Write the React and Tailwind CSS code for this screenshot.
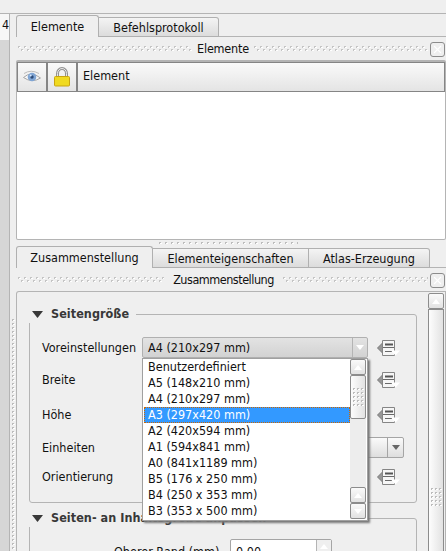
import React from 'react';

const papers = [
  'Benutzerdefiniert', 'A5 (148x210 mm)', 'A4 (210x297 mm)', 'A3 (297x420 mm)', 'A2 (420x594 mm)',
  'A1 (594x841 mm)', 'A0 (841x1189 mm)', 'B5 (176 x 250 mm)', 'B4 (250 x 353 mm)', 'B3 (353 x 500 mm)',
];

function TitleGrip({ id, className }) {
  return (
    <svg className={`h-[6px] ${className}`} shapeRendering="crispEdges">
      <defs>
        <pattern id={id} width="6" height="6" patternUnits="userSpaceOnUse">
          <path d="M0 0h2v1h-1v1h-1zM3 3h2v1h-1v1h-1z" fill="#c4c4c4" />
          <path d="M1 1h1v1h-1zM2 1h1v1h-1zM4 4h2v1h-2z" fill="#fff" />
        </pattern>
      </defs>
      <rect width="100%" height="6" fill={`url(#${id})`} />
    </svg>
  );
}

function DotGrip({ id, className, w = 6, h = 4 }) {
  return (
    <svg className={className} shapeRendering="crispEdges">
      <defs>
        <pattern id={id} width={w} height={h} patternUnits="userSpaceOnUse">
          <path d="M0 0h2v1h-1v1h-1z" fill="#bcbcbc" />
          <path d="M1 1h1v1h-1zM2 1h1v1h-1z" fill="#fff" />
        </pattern>
      </defs>
      <rect width="100%" height="100%" fill={`url(#${id})`} />
    </svg>
  );
}

function DockTitle({ id, text, left, right, label }) {
  return (
    <div className="flex h-[22px] shrink-0 items-center pl-[2px] pr-[1px]">
      <TitleGrip id={`${id}a`} className={left} />
      <span className={`shrink-0 whitespace-nowrap text-center ${label}`}>{text}</span>
      <TitleGrip id={`${id}b`} className={right} />
      <span className="ml-auto flex h-[15px] w-[15px] items-center justify-center rounded-[3px] border border-[#8c8c8c] bg-[#efefef]">
        <svg className="h-[9px] w-[9px]" viewBox="0 0 9 9"><path d="M1 1l7 7M8 1l-7 7" stroke="#fff" strokeWidth="1.1" /></svg>
      </span>
    </div>
  );
}

function Tab({ active, className, children }) {
  return active ? (
    <div className={`h-[22px] rounded-t-[3px] border border-b-0 border-[#b0b0b0] bg-[#efefef] text-center leading-[22px] ${className}`}>{children}</div>
  ) : (
    <div className={`mt-[2px] h-[20px] border border-l-0 border-[#b0b0b0] bg-linear-to-b from-[#f4f4f4] to-[#dcdcdc] text-center leading-[19px] ${className}`}>{children}</div>
  );
}

function Arrow({ up, color = '#fff' }) {
  return (
    <svg className="h-[5px] w-[8px]" viewBox="0 0 8 5"><path d={up ? 'M0 5L4 0L8 5z' : 'M0 0L4 5L8 0z'} fill={color} /></svg>
  );
}

function ScrollButton({ up }) {
  return (
    <div className="flex h-[16px] w-[16px] shrink-0 items-center justify-center rounded-[2px] border border-[#8c8c8c] bg-linear-to-b from-[#fafafa] to-[#e2e2e2]"><Arrow up={up} /></div>
  );
}

function Override() {
  return (
    <svg className="ml-[9px] h-[18px] w-[24px] shrink-0" viewBox="0 0 24 18">
      <path d="M0.500 9L6 3.500V14.500z" fill="#979797" stroke="#7a7a7a" />
      <path d="M5.500 1.500H17.500V16.500H5.500z" fill="#f6f6f6" stroke="#858585" />
      <path d="M8 5.500H16" stroke="#555" strokeWidth="2" />
      <path d="M8 12.500H15M6 8.500H17" stroke="#6a6a6a" />
      <path d="M14 11.500H23L18.500 16.500z" fill="#fff" />
    </svg>
  );
}

function Field({ label, className, children }) {
  return (
    <div className={`flex items-center ${className}`}>
      <span className="w-[100px] shrink-0 whitespace-nowrap">{label}</span>
      {children}
      <Override />
    </div>
  );
}

function GroupBox({ title, className, children }) {
  return (
    <fieldset className={`ml-[12px] w-[388px] rounded-[3px] border border-[#b4b4b4] ${className}`}>
      <legend className="-ml-px flex h-[18px] items-center bg-[#efefef] pl-[3px] pr-[7px] text-[12.5px] font-bold tracking-[0.05px] text-[#383838]">
        <svg className="mr-[8px] h-[7px] w-[11px]" viewBox="0 0 11 7"><path d="M0 0H11L5.500 7z" fill="#383838" /></svg>
        <span className="whitespace-nowrap">{title}</span>
      </legend>
      {children}
    </fieldset>
  );
}

function Eye() {
  return (
    <svg className="h-[16px] w-[20px]" viewBox="0 0 20 16">
      <path d="M1.500 8.500Q9 1.500 18.500 9Q10 14.500 1.500 8.500z" fill="#f7f7f7" stroke="#a5a5a5" />
      <path d="M2 4.500Q9 0 17 4.500" fill="none" stroke="#bcbcbc" />
      <circle cx="10" cy="8" r="4.300" fill="#7fa5d4" />
      <circle cx="10" cy="8" r="1.700" fill="#2b4a78" />
      <circle cx="8.700" cy="6.500" r="1" fill="#d6e8ff" />
    </svg>
  );
}

function Lock() {
  return (
    <svg className="h-[20px] w-[16px]" viewBox="0 0 16 20">
      <path d="M3.500 11V6.500a4.500 5 0 0 1 9 0V11" fill="none" stroke="#929292" strokeWidth="3" />
      <path d="M3.500 11V6.500a4.500 5 0 0 1 9 0V11" fill="none" stroke="#e9e9e9" />
      <rect x="0.500" y="9.500" width="15" height="9.500" rx="1" fill="#f0da20" stroke="#c9a511" />
    </svg>
  );
}

export default function App() {
  return (
    <div className="relative flex h-[551px] w-[446px] flex-col overflow-hidden bg-[#efefef] font-['DejaVu_Sans_Condensed','DejaVu_Sans',sans-serif] text-[12.5px] [font-stretch:condensed] leading-[16px] text-[#111]">
      <div className="h-[14px] shrink-0 border-b border-[#b4b4b4]" />
      <div className="flex min-h-0 flex-1">
        <div className="w-[10px] shrink-0 border-r border-[#b4b4b4] bg-[#d6d6d6]">
          <div className="h-[26px] overflow-hidden bg-[#f7f7f7] pl-[2px] pt-[3px]">4</div>
        </div>
        <div className="w-[6px] shrink-0 pl-[2px] pt-[305px]"><DotGrip id="side" className="h-[232px] w-[3px]" w={3} h={4} /></div>
        <div className="flex w-[430px] shrink-0 flex-col pt-px">
          <div className="flex h-[22px] shrink-0">
            <Tab active className="w-[83px]">Elemente</Tab>
            <Tab className="w-[120px] rounded-tr-[3px]">Befehlsprotokoll</Tab>
            <div className="flex-1 border-b border-[#b4b4b4]" />
          </div>
          <div className="h-px shrink-0" />
          <DockTitle id="e" text="Elemente" left="w-[174px]" label="w-[62px] tracking-[-0.2px]" right="w-[174px]" />
          <div className="flex h-[180px] shrink-0 flex-col rounded-[2px] border border-t-2 border-[#b4b4b4] bg-white">
            <div className="flex h-[30px] w-full shrink-0 border border-[#858585] bg-linear-to-b from-[#fafafa] to-[#e4e4e4]">
              <div className="flex w-[30px] items-center justify-center border-r-2 border-[#858585]"><Eye /></div>
              <div className="flex w-[30px] items-center justify-center border-r-2 border-[#858585]"><Lock /></div>
              <div className="pl-[5px] pt-[5px]">Element</div>
            </div>
          </div>
          <div className="flex h-[6px] shrink-0 justify-center pr-[5px] pt-[2px]"><DotGrip id="split" className="h-[3px] w-[139px]" /></div>
          <div className="flex h-[22px] shrink-0">
            <Tab active className="w-[137px]">Zusammenstellung</Tab>
            <Tab className="w-[156px]">Elementeigenschaften</Tab>
            <Tab className="w-[121px] rounded-tr-[3px]">Atlas-Erzeugung</Tab>
            <div className="flex-1 border-b border-[#b4b4b4]" />
          </div>
          <div className="h-px shrink-0" />
          <DockTitle id="z" text="Zusammenstellung" left="w-[146px]" label="w-[119px] tracking-[-0.48px]" right="w-[145px]" />
          <div className="flex min-h-0 flex-1 overflow-hidden rounded-tl-[3px] border border-b-0 border-[#b4b4b4]">
            <div className="w-[411px] shrink-0 pt-[13px]">
              <GroupBox title="Seitengröße" className="h-[198px]">
                <div className="pl-[12px]">
                  <Field label="Voreinstellungen" className="mt-[14px] h-[21px]">
                    <div className="flex h-[21px] w-[226px] shrink-0 items-center rounded-[2px] border border-[#b0b0b0] bg-linear-to-b from-[#e3e3e3] to-[#d2d2d2] pl-[5px]">
                      A4 (210x297 mm)
                      <span className="ml-auto flex h-full w-[15px] items-center justify-center border-l border-[#b4b4b4]"><Arrow /></span>
                    </div>
                  </Field>
                  <Field label="Breite" className="mt-[11px] h-[22px]"><div className="w-[226px] shrink-0" /></Field>
                  <Field label="Höhe" className="mt-[13px] h-[22px]"><div className="w-[226px] shrink-0" /></Field>
                  <div className="mt-[11px] flex h-[21px] items-center">
                    <span className="w-[100px] shrink-0">Einheiten</span>
                    <div className="flex h-[21px] w-[262px] items-center justify-end rounded-[2px] border border-[#a5a5a5] bg-linear-to-b from-[#fafafa] to-[#dedede]">
                      <span className="flex h-full w-[16px] items-center justify-center border-l border-[#a5a5a5]"><Arrow color="#666" /></span>
                    </div>
                  </div>
                  <Field label="Orientierung" className="mt-[8px] h-[22px]"><div className="w-[226px] shrink-0" /></Field>
                </div>
              </GroupBox>
              <GroupBox title="Seiten- an Inhaltsgröße anpassen" className="mt-[6px] h-[100px]">
                <div className="flex pl-[84px] pt-[12px]">
                  <span className="w-[116px] shrink-0 pt-[5px]">Oberer Rand (mm)</span>
                  <div className="flex h-[25px] w-[102px] rounded-[2px] border border-[#a5a5a5] bg-white pl-[5px]">
                    <span className="pt-[4px]">0,00</span>
                    <span className="ml-auto flex w-[15px] justify-center border-l border-[#b4b4b4] bg-[#efefef] pt-[4px]"><Arrow up /></span>
                  </div>
                </div>
              </GroupBox>
            </div>
            <div className="flex w-[17px] shrink-0 flex-col pt-px">
              <ScrollButton up />
              <div className="flex min-h-0 w-[16px] flex-1 items-center justify-center border border-b-0 border-[#8c8c8c] bg-linear-to-r from-[#fdfdfd] to-[#e2e2e2] pt-[134px]">
                <DotGrip id="sb" className="h-[19px] w-[11px]" w={4} h={4} />
              </div>
            </div>
          </div>
        </div>
      </div>

      <div className="absolute left-[142px] top-[358px] flex h-[163px] w-[226px] border border-[#a0a0a0] bg-white p-px pt-0 shadow-[2px_2px_2px_#777]">
        <ul className="w-[207px]">
          {papers.map((p, i) => (
            <li key={p} className={i === 3 ? 'h-[16px] border border-dotted border-[#cc6600] bg-[#3399ff] pl-[3px] leading-[14px] text-white' : 'h-[16px] pl-[4px] leading-[16px]'}>{p}</li>
          ))}
        </ul>
        <div className="flex w-[16px] flex-col bg-[#ededed]">
          <ScrollButton up />
          <div className="flex h-[44px] items-center justify-center rounded-[2px] border border-[#8c8c8c] bg-linear-to-r from-[#fdfdfd] to-[#e2e2e2]"><DotGrip id="pop" className="h-[19px] w-[11px]" w={4} h={4} /></div>
          <div className="flex-1" />
          <ScrollButton up />
          <ScrollButton />
        </div>
      </div>
    </div>
  );
}
